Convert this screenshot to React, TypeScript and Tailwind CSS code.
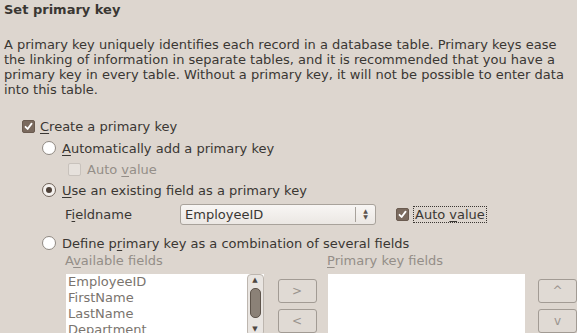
import React from 'react'

const U = ({ children }: { children: React.ReactNode }) => <span className="underline underline-offset-2">{children}</span>

function Check({ checked, disabled }: { checked?: boolean; disabled?: boolean }) {
  if (checked) {
    return (
      <span className="w-[13px] h-[13px] rounded-[2px] bg-[#7a6a5e] border border-[#6a5b50] flex items-center justify-center shrink-0">
        <svg width="9" height="9" viewBox="0 0 9 9">
          <path d="M1.5 4.8 L3.6 7 L7.6 1.6" fill="none" stroke="#fff" strokeWidth="1.8" strokeLinecap="round" strokeLinejoin="round" />
        </svg>
      </span>
    )
  }
  return (
    <span
      className={`w-[13px] h-[13px] rounded-[2px] border shrink-0 ${
        disabled ? 'bg-[#e6e1dc] border-[#c8c2bc]' : 'bg-white border-[#9a948e]'
      }`}
    />
  )
}

function Radio({ checked }: { checked?: boolean }) {
  return (
    <span
      className={`w-[14px] h-[14px] rounded-full border flex items-center justify-center shrink-0 ${
        checked ? 'bg-[#f4f1ee] border-[#6e6258]' : 'bg-white border-[#8f8982]'
      }`}
    >
      {checked && <span className="w-[6px] h-[6px] rounded-full bg-[#4e4138]" />}
    </span>
  )
}

function SmallButton({ label }: { label: string }) {
  return (
    <div className="w-[39px] h-[24px] rounded-[3px] border border-[#a29b94] bg-[#e0dad4] flex items-center justify-center text-[#9a948e] text-[12px]">
      {label}
    </div>
  )
}

export default function App() {
  const fields = ['EmployeeID', 'FirstName', 'LastName', 'Department']
  return (
    <div
      className="w-[577px] h-[333px] overflow-hidden bg-[#ddd6cf] text-[#3a3733] text-[13px] leading-[15px]"
      style={{ fontFamily: '"DejaVu Sans", Verdana, sans-serif' }}
    >
      <div className="px-[4px]">
        <div className="h-[20px] leading-[20px] font-bold">Set primary key</div>
        <p className="mt-[17px] w-[570px]">
          A primary key uniquely identifies each record in a database table. Primary keys ease the linking of information in separate tables, and it is recommended that you have a primary key in every table. Without a primary key, it will not be possible to enter data into this table.
        </p>
      </div>

      <div className="mt-[18px] pl-[22px] flex flex-col">
        <div className="h-[22px] flex items-center gap-[5px]">
          <Check checked />
          <span><U>C</U>reate a primary key</span>
        </div>

        <div className="pl-[20px] flex flex-col">
          <div className="h-[22px] flex items-center gap-[6px]">
            <Radio />
            <span><U>A</U>utomatically add a primary key</span>
          </div>
          <div className="h-[20px] pl-[26px] flex items-center gap-[6px] text-[#948e88]">
            <Check disabled />
            <span>Auto <U>v</U>alue</span>
          </div>
          <div className="h-[22px] flex items-center gap-[6px]">
            <Radio checked />
            <span><U>U</U>se an existing field as a primary key</span>
          </div>
          <div className="h-[24px] mt-[1px] pl-[23px] flex items-center">
            <span className="w-[115px]">F<U>i</U>eldname</span>
            <div className="w-[196px] h-[21px] rounded-[3px] border border-[#a8a29b] bg-gradient-to-b from-[#f8f6f4] to-[#ebe7e3] flex items-center">
              <span className="flex-1 pl-[4px]">EmployeeID</span>
              <span className="w-px h-[15px] bg-[#a8a29b]" />
              <span className="w-[19px] flex flex-col items-center text-[#5a534d] text-[6px] leading-[6px]">
                <span>▲</span>
                <span>▼</span>
              </span>
            </div>
            <div className="ml-[20px] flex items-center gap-[4px]">
              <Check checked />
              <span className="border border-dotted border-[#3a3733] px-[1px] leading-[15px]">Auto <U>v</U>alue</span>
            </div>
          </div>
          <div className="h-[20px] mt-[7px] flex items-center gap-[6px]">
            <Radio />
            <span>Define p<U>r</U>imary key as a combination of several fields</span>
          </div>
          <div className="h-[14px] flex items-center text-[#948e88]">
            <span className="w-[285px] pl-[23px]">A<U>v</U>ailable fields</span>
            <span><U>P</U>rimary key fields</span>
          </div>

          <div className="mt-[7px] pl-[24px] flex items-start">
            <div className="w-[200px] h-[62px] bg-white flex">
              <div className="flex-1 pl-[2px] text-[#7a746e] leading-[16px]">
                {fields.map((f) => (
                  <div key={f}>{f}</div>
                ))}
              </div>
              <div className="w-[17px] h-full rounded-[4px] border border-[#bdb6af] bg-[#e9e5e1] flex flex-col items-center justify-between py-[2px] text-[7px] leading-[7px] text-[#4e4842]">
                <span>▲</span>
                <span className="w-[11px] h-[30px] -mt-[4px] rounded-[5px] border border-[#5e544b] bg-[#8b8177]" />
                <span>▼</span>
              </div>
            </div>
            <div className="ml-[14px] mt-[5px] flex flex-col gap-[6px]">
              <SmallButton label=">" />
              <SmallButton label="<" />
            </div>
            <div className="ml-[11px] w-[200px] h-[62px] bg-white" />
            <div className="ml-[13px] mt-[5px] flex flex-col gap-[6px]">
              <SmallButton label="^" />
              <SmallButton label="v" />
            </div>
          </div>
        </div>
      </div>
    </div>
  )
}
